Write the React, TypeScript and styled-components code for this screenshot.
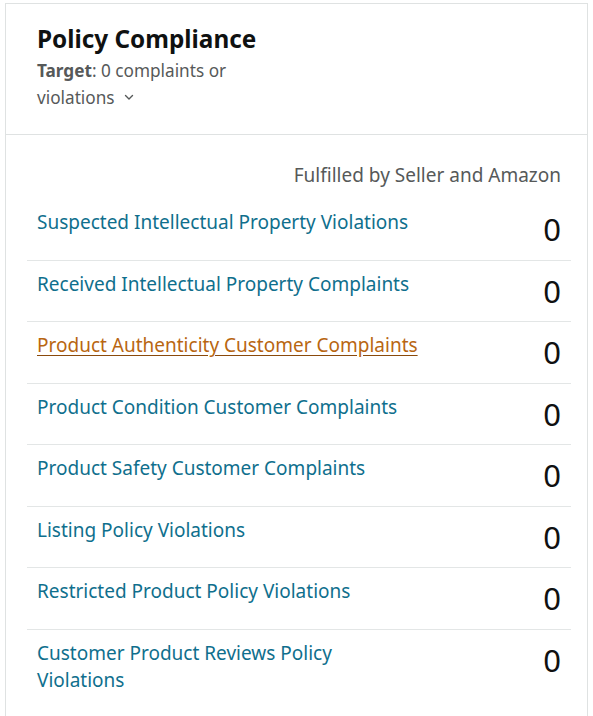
import React from "react";
import styled, { createGlobalStyle } from "styled-components";

const Global = createGlobalStyle`
  html, body { margin: 0; padding: 0; background: #ffffff; }
  body { font-family: "Noto Sans", "Open Sans", Arial, sans-serif; color: #0f1111; }
`;

const Page = styled.div`
  padding: 3px 5px 0 5px;
`;

const Card = styled.section`
  border: 1px solid #dfe2e2;
  border-bottom: none;
  background: #fff;
  min-height: 713px;
  box-sizing: border-box;
`;

const Header = styled.header`
  padding: 19px 32px 23px 31px;
  border-bottom: 1px solid #dfe2e2;
`;

const Title = styled.h2`
  margin: 0;
  font-size: 24.3px;
  line-height: 32px;
  font-weight: 700;
  color: #0f1111;
`;

const Subtitle = styled.div`
  margin-top: 2px;
  width: 230px;
  font-size: 17.2px;
  line-height: 27px;
  color: #565959;
`;

const Bold = styled.span`
  font-weight: 700;
`;

const Chevron = styled.svg`
  display: inline-block;
  margin-left: 9px;
  vertical-align: middle;
  position: relative;
  top: -2px;
`;

const Body = styled.div`
  padding: 27px 16px 0 21px;
`;

const Fulfilled = styled.div`
  text-align: right;
  font-size: 19px;
  line-height: 26px;
  color: #565959;
  padding-right: 10px;
  margin-bottom: 11px;
`;

const List = styled.ul`
  list-style: none;
  margin: 0;
  padding: 0;
`;

const Row = styled.li`
  display: flex;
  justify-content: space-between;
  align-items: flex-start;
  padding: 10px 10px 10.5px 10px;
  & + & {
    border-top: 1px solid #e3e6e6;
  }
`;

const Label = styled.a<{ $active?: boolean }>`
  max-width: 384px;
  font-size: 19px;
  line-height: 27.5px;
  color: ${(p) => (p.$active ? "#b86611" : "#0f6f8d")};
  text-decoration: ${(p) => (p.$active ? "underline" : "none")};
  text-decoration-color: #8a4a0c;
  text-underline-offset: 3px;
  cursor: pointer;
`;

const Count = styled.span`
  font-size: 31px;
  line-height: 40px;
  color: #0f1111;
`;

const rows = [
  "Suspected Intellectual Property Violations",
  "Received Intellectual Property Complaints",
  "Product Authenticity Customer Complaints",
  "Product Condition Customer Complaints",
  "Product Safety Customer Complaints",
  "Listing Policy Violations",
  "Restricted Product Policy Violations",
  "Customer Product Reviews Policy Violations",
];

export default function App() {
  return (
    <>
      <Global />
      <Page>
        <Card>
          <Header>
            <Title>Policy Compliance</Title>
            <Subtitle>
              <Bold>Target</Bold>: 0 complaints or violations
              <Chevron width="10" height="7" viewBox="0 0 10 7">
                <path d="M1.5 1.5 L5 5 L8.5 1.5" fill="none" stroke="#565959" strokeWidth="1.4" strokeLinecap="round" strokeLinejoin="round" />
              </Chevron>
            </Subtitle>
          </Header>
          <Body>
            <Fulfilled>Fulfilled by Seller and Amazon</Fulfilled>
            <List>
              {rows.map((r, i) => (
                <Row key={r}>
                  <Label $active={i === 2}>{r}</Label>
                  <Count>0</Count>
                </Row>
              ))}
            </List>
          </Body>
        </Card>
      </Page>
    </>
  );
}
